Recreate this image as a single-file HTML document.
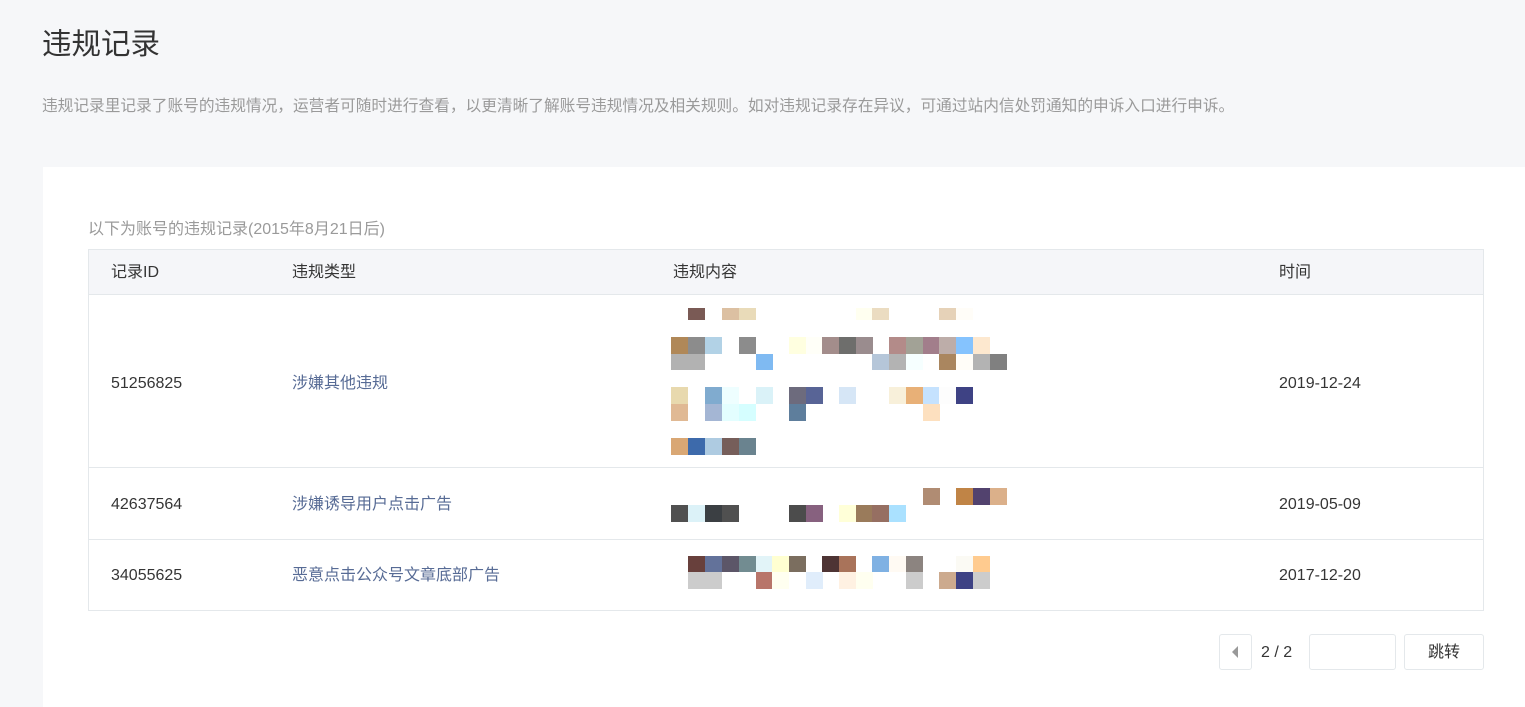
<!DOCTYPE html>
<html><head><meta charset="utf-8"><style>
*{margin:0;padding:0;box-sizing:border-box}
body{width:1525px;height:707px;background:#f6f7f9;font-family:"Liberation Sans","Noto Sans CJK SC",sans-serif;position:relative;overflow:hidden;color:#353535}
.a{position:absolute}
h1{position:absolute;left:42px;top:21px;font-size:29.5px;font-weight:normal;color:#333}
.desc{left:42px;top:93px;font-size:15.7px;color:#9a9a9a}
.panel{left:43px;top:167px;width:1482px;height:540px;background:#fff}
.sub{left:88px;top:215px;font-size:16px;color:#9a9a9a}
.tbl{left:88px;top:249px;width:1396px;height:362px;border:1px solid #e4e8eb}
.hd{left:89px;top:250px;width:1394px;height:45px;background:#f5f6f9;border-bottom:1px solid #e4e8eb}
.ln{height:1px;background:#e4e8eb;left:89px;width:1394px}
.t{font-size:16px;color:#353535;line-height:20px}
.lk{color:#576b95}
.m{position:absolute;width:17px;height:17px}
.btn{border:1px solid #e4e8eb;border-radius:3px;background:#fff}
</style></head><body>
<h1>违规记录</h1>
<div class="a desc">违规记录里记录了账号的违规情况，运营者可随时进行查看，以更清晰了解账号违规情况及相关规则。如对违规记录存在异议，可通过站内信处罚通知的申诉入口进行申诉。</div>
<div class="a panel"></div>
<div class="a sub">以下为账号的违规记录(2015年8月21日后)</div>
<div class="a tbl"></div>
<div class="a hd"></div>
<div class="a ln" style="top:467px"></div>
<div class="a ln" style="top:539px"></div>
<div class="a t" style="left:111px;top:263px">记录ID</div>
<div class="a t" style="left:292px;top:263px">违规类型</div>
<div class="a t" style="left:673px;top:263px">违规内容</div>
<div class="a t" style="left:1279px;top:263px">时间</div>
<div class="a t" style="left:111px;top:374px">51256825</div>
<div class="a t lk" style="left:292px;top:374px">涉嫌其他违规</div>
<div class="a t" style="left:1279px;top:374px">2019-12-24</div>
<div class="a t" style="left:111px;top:495px">42637564</div>
<div class="a t lk" style="left:292px;top:495px">涉嫌诱导用户点击广告</div>
<div class="a t" style="left:1279px;top:495px">2019-05-09</div>
<div class="a t" style="left:111px;top:566px">34055625</div>
<div class="a t lk" style="left:292px;top:566px">恶意点击公众号文章底部广告</div>
<div class="a t" style="left:1279px;top:566px">2017-12-20</div>
<div id="mos"></div>
<div class="a btn" style="left:1219px;top:634px;width:33px;height:36px"></div>
<div class="a" style="left:1232px;top:646px;width:0;height:0;border-top:6px solid transparent;border-bottom:6px solid transparent;border-right:6px solid #999"></div>
<div class="a t" style="left:1261px;top:643px">2 / 2</div>
<div class="a btn" style="left:1309px;top:634px;width:87px;height:36px"></div>
<div class="a btn" style="left:1404px;top:634px;width:80px;height:36px"></div>
<div class="a t" style="left:1428px;top:643px">跳转</div>
<script>
var R=[
[308,12,[[688,'#7a5a55'],[722,'#dcc0a2'],[739,'#e9dbb9'],[856,'#fffff0'],[872,'#ebdcc1'],[939,'#e6d2b8'],[956,'#fffdf8']]],
[337,17,[[671,'#b08858'],[688,'#8c8c8c'],[705,'#b2d2e6'],[739,'#8c8c8c'],[789,'#ffffe0'],[806,'#fffff8'],[822,'#a38d8b'],[839,'#6e6e6c'],[856,'#9a8c8e'],[889,'#b38b89'],[906,'#a2a296'],[923,'#a27e8b'],[939,'#bdada9'],[956,'#85c3fe'],[973,'#fde8cf']]],
[354,16,[[671,'#b2b2b2'],[688,'#b2b2b2'],[756,'#7fbaf2'],[872,'#b5c6d9'],[889,'#b3b3b3'],[906,'#f6ffff'],[939,'#aa865f'],[956,'#fffdf8'],[973,'#b3b3b3'],[990,'#808080']]],
[387,17,[[671,'#e8d9ae'],[705,'#80abcf'],[722,'#eefeff'],[756,'#daf2f8'],[789,'#6d6b7d'],[806,'#586496'],[839,'#d6e6f6'],[889,'#f8f0da'],[906,'#e8b077'],[923,'#c5e2fe'],[939,'#fdfdfd'],[956,'#3e4284']]],
[404,17,[[671,'#e0b994'],[705,'#a4b6d4'],[722,'#e3feff'],[739,'#d5feff'],[789,'#5e7e9c'],[923,'#fde0bf']]],
[438,17,[[671,'#d9a774'],[688,'#3d6aab'],[705,'#aecbe1'],[722,'#765e5a'],[739,'#6a838f']]],
[488,17,[[923,'#b08c73'],[956,'#c08446'],[973,'#52426e'],[990,'#dbb08a']]],
[505,17,[[671,'#505050'],[688,'#dcf2f8'],[705,'#3b3f43'],[722,'#505050'],[789,'#4c4c4c'],[806,'#87617f'],[839,'#ffffd8'],[856,'#9a7b5b'],[872,'#966f62'],[889,'#aae1ff']]],
[556,16,[[688,'#68403c'],[705,'#63729a'],[722,'#5c5668'],[739,'#728c91'],[756,'#e2f4f8'],[772,'#ffffd1'],[789,'#7b6e5f'],[822,'#4e3434'],[839,'#a9735a'],[872,'#7fb1e3'],[889,'#fffaf3'],[906,'#8c8480'],[956,'#fbfaf4'],[973,'#ffcb8f']]],
[572,17,[[688,'#cccccc'],[705,'#cccccc'],[756,'#b8756a'],[772,'#fffff0'],[806,'#e0edfb'],[839,'#fff1e2'],[856,'#fffff0'],[906,'#cccccc'],[939,'#ccaa8e'],[956,'#3e4284'],[973,'#cccccc']]]
];
var h='';R.forEach(function(r){r[2].forEach(function(b){h+='<div class="m" style="left:'+b[0]+'px;top:'+r[0]+'px;height:'+r[1]+'px;background:'+b[1]+'"></div>';});});
document.getElementById('mos').innerHTML=h;
</script>
</body></html>
